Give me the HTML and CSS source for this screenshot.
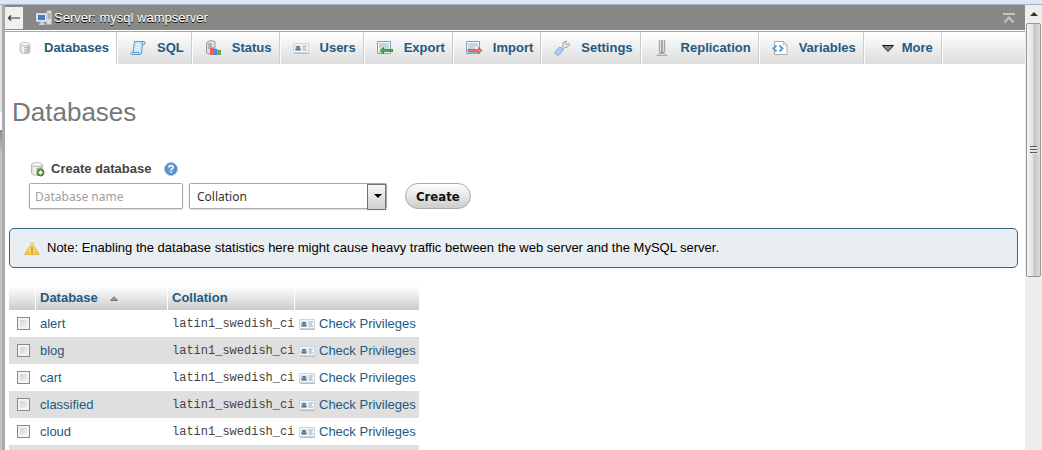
FILE: index.html
```html
<!DOCTYPE html>
<html lang="en">
<head>
    <meta charset="UTF-8">
    <meta name="viewport" content="width=device-width, initial-scale=1.0">
    <title>mysql wampserver | phpMyAdmin</title>
    <link rel="stylesheet" href="styles.css">
</head>
<body>
    <!-- icon sprite -->
    <svg class="sprite" aria-hidden="true">
        <defs>
            <linearGradient id="cyl" x1="0" x2="1" y1="0" y2="0">
                <stop offset="0" stop-color="#d8d8d8"/>
                <stop offset=".4" stop-color="#fafafa"/>
                <stop offset="1" stop-color="#b4b4b4"/>
            </linearGradient>
            <linearGradient id="warn" x1="0" x2="0" y1="0" y2="1">
                <stop offset="0" stop-color="#fff3b0"/>
                <stop offset="1" stop-color="#f5c33c"/>
            </linearGradient>
        </defs>
        <symbol id="i-db" viewBox="0 0 16 16">
            <path d="M2.500 3.500v9c0 2.400 11 2.400 11 0v-9z" fill="url(#cyl)" stroke="#b8b8b8"/>
            <ellipse cx="8" cy="3.600" rx="5.500" ry="2" fill="#f6f6f6" stroke="#c0c0c0"/>
            <path d="M7 7.500c2 .2 4-.1 5-.5M7 10c2 .2 4-.1 5-.5M7 12.500c2 .2 4-.1 5-.5" fill="none" stroke="#a4a4a4"/>
        </symbol>
        <symbol id="i-sql" viewBox="0 0 16 16">
            <path d="M4.500 1.500h9.500c1.500 0 1.500 3 0 3h-1.500l-1 8.500c-.2 1.200-1 1.500-2 1.500H1.500c-1 0-1-2 0-2h1.500z" fill="#cfe5f6" stroke="#5b9bc8"/>
            <path d="M6 4.500h4M5.700 7h4M5.500 9.500h4" stroke="#eef7fd"/>
            <path d="M3 12.500h5.500c1 0 0 2 1.500 2M12.500 4.500c-1 0-.7-3 1-3" fill="none" stroke="#5b9bc8"/>
        </symbol>
        <symbol id="i-status" viewBox="0 0 16 16">
            <path d="M1.500 2.500l4-2 4.500 1v11l-4 2-4.500-1.500z" fill="#ddd" stroke="#999"/>
            <path d="M3 4h4M3 6h4M3 8h3" stroke="#8a8a8a"/>
            <path d="M5 7.500h4V15H5z" fill="#e5635c"/>
            <path d="M9 9h3.500v6H9z" fill="#4d86dc"/>
            <path d="M12.500 10H16v5h-3.500z" fill="#5cae55"/>
        </symbol>
        <symbol id="i-users" viewBox="0 0 16 16">
            <path d="M.5 3.500h15v9H.5z" fill="#f5f7f9" stroke="#ccd3d9"/>
            <path d="M1 13.500h15" stroke="#bbb"/>
            <path d="M2 5.500h6v5H2z" fill="#bfd3e6"/>
            <path d="M3.500 6h3v2.200h-3zM2.500 8.500h5v2h-5z" fill="#5d7487"/>
            <path d="M9.500 6h4.500M9.500 8h3.500M9.500 10h4.500" stroke="#8aa9c4"/>
        </symbol>
        <symbol id="i-export" viewBox="0 0 16 16">
            <path d="M.5 1.500h13v12H.5z" fill="#f1f7fb" stroke="#84a2b4"/>
            <path d="M2 4h10M2 6h10M2 8h10M2 12h5" stroke="#98b6ca"/>
            <path d="M3 10.500L6.500 7.500v2H16v2H6.500v2z" fill="#57a951" stroke="#287626" stroke-width=".7"/>
        </symbol>
        <symbol id="i-import" viewBox="0 0 16 16">
            <path d="M.5 1.500h13v12H.5z" fill="#f1f7fb" stroke="#84a2b4"/>
            <path d="M2 4h10M2 6h10M2 8h7M2 12.500h10" stroke="#98b6ca"/>
            <path d="M16 10.500l-3.500-3v2H2v2h10.500v2z" fill="#f27b7b" stroke="#cf2f35" stroke-width=".7"/>
        </symbol>
        <symbol id="i-settings" viewBox="0 0 16 16">
            <path d="M7 8.500l2-2.300C8.500 4 9.500 1.500 12 1l.6.500-1.600 2 1.300 1.300 2.200-1.300 1 .6c-.3 2.200-2.500 3.700-4.700 3.200l-2.200 2.500z" fill="#eee" stroke="#8d8d8d" stroke-width=".9"/>
            <path d="M6 7l3.300 2.700-4 5c-1.600 1.600-5.600-1.200-4-3.500z" fill="#b4cbf3" stroke="#7f9fd8" stroke-width=".9"/>
        </symbol>
        <symbol id="i-repl" viewBox="0 0 16 16">
            <path d="M5.500 0v11l1.500 3M10.500 0v11l-1.500 3" fill="none" stroke="#a4a4a4" stroke-width="1.400"/>
            <path d="M8 0v14" stroke="#777" stroke-width="1.200"/>
            <path d="M2.500 15.500h11M4 14h2M10 14h2" stroke="#aaa"/>
        </symbol>
        <symbol id="i-vars" viewBox="0 0 16 16">
            <path d="M2.500 1.500h9l3.500 3.500v9.500H2.500z" fill="#fff" stroke="#aaa"/>
            <path d="M11.500 1.500V5H15" fill="none" stroke="#bbb"/>
            <path d="M4.500 5.500L1.500 8.500l3 3M7.500 5.500l3 3-3 3" fill="none" stroke="#5aa0d4" stroke-width="2"/>
        </symbol>
        <symbol id="i-more" viewBox="0 0 16 16">
            <path d="M2.500 5.500h11L8 11.500z" fill="#888" stroke="#111"/>
        </symbol>
        <symbol id="i-server" viewBox="0 0 16 16">
            <path d="M10.500 1.500l3-1 2 .5v13l-2 .5h-3z" fill="#d9dedb" stroke="#a9b5ae"/>
            <path d="M11.500 4h3M11.500 6h3M11.500 8h3" stroke="#75837b"/>
            <path d="M.5 3.500h10v8H.5z" fill="#dfe7f2" stroke="#c9d6e6"/>
            <path d="M2 5h7v5H2z" fill="#4379c8"/>
            <path d="M4.500 12h3v1.500H9V15H3v-1.500h1.500z" fill="#c6d3e4"/>
        </symbol>
        <symbol id="i-help" viewBox="0 0 16 16">
            <circle cx="8" cy="8" r="6.500" fill="#6c9ad6" stroke="#a8c3e6"/>
            <circle cx="8" cy="8" r="5" fill="none" stroke="#477bbf"/>
            <path d="M5.900 6.500c0-2.800 4.300-2.600 4.300-.3 0 1.600-2.100 1.400-2.100 3.100M8.100 10.400v1.500" fill="none" stroke="#fff" stroke-width="1.500"/>
        </symbol>
        <symbol id="i-warn" viewBox="0 0 16 16">
            <path d="M8 2.500l7.300 12H.7z" fill="url(#warn)" stroke="#e6b545" stroke-linejoin="round"/>
            <path d="M8 6.500v4M8 11.500v1.500" stroke="#b98a28" stroke-width="1.500"/>
        </symbol>
        <symbol id="i-plus" viewBox="0 0 16 16">
            <circle cx="11.500" cy="11.500" r="3.500" fill="#5aa53a" stroke="#3f7d2a"/>
            <path d="M9.500 11.500h4M11.500 9.500v4" stroke="#fff" stroke-width="1.300"/>
        </symbol>
    </svg>

    <div class="window-edge"></div>
    <div class="frame">
        <div class="nav-edge"></div>
        <div class="content">
            <header class="server-bar">
                <button class="collapse" type="button" aria-label="Hide panel">
                    <svg width="14" height="8" viewBox="0 0 14 8"><path d="M1 4h12M4 1.500L1.500 4 4 6.500" fill="none" stroke="#333" stroke-width="1.200"/></svg>
                </button>
                <svg class="icon"><use href="#i-server"/></svg>
                <a class="server-name" href="#">Server: mysql wampserver</a>
                <button class="to-top" type="button" aria-label="Scroll to top">
                    <svg width="12" height="12" viewBox="0 0 12 12"><path d="M0 2h12M1.500 10.500L6 5.500l4.500 5" fill="none" stroke="#c4c4c4" stroke-width="2"/></svg>
                </button>
            </header>

            <nav class="tabs">
                <a class="tab active" href="#"><svg class="icon small"><use href="#i-db"/></svg>Databases</a>
                <a class="tab" href="#"><svg class="icon"><use href="#i-sql"/></svg>SQL</a>
                <a class="tab" href="#"><svg class="icon"><use href="#i-status"/></svg>Status</a>
                <a class="tab" href="#"><svg class="icon"><use href="#i-users"/></svg>Users</a>
                <a class="tab" href="#"><svg class="icon"><use href="#i-export"/></svg>Export</a>
                <a class="tab" href="#"><svg class="icon"><use href="#i-import"/></svg>Import</a>
                <a class="tab" href="#"><svg class="icon"><use href="#i-settings"/></svg>Settings</a>
                <a class="tab" href="#"><svg class="icon"><use href="#i-repl"/></svg>Replication</a>
                <a class="tab" href="#"><svg class="icon"><use href="#i-vars"/></svg>Variables</a>
                <a class="tab more" href="#"><svg class="icon"><use href="#i-more"/></svg>More</a>
            </nav>

            <main class="page">
                <h1>Databases</h1>

                <form class="create-form">
                    <div class="create-title">
                        <svg class="icon"><use href="#i-db"/><use href="#i-plus"/></svg>
                        <label for="new-db">Create database</label>
                        <a class="help" href="#" aria-label="Documentation"><svg class="icon"><use href="#i-help"/></svg></a>
                    </div>
                    <div class="create-fields">
                        <input class="db-name" id="new-db" type="text" placeholder="Database name">
                        <div class="select-box">
                            <select aria-label="Collation">
                                <option>Collation</option>
                                <option>latin1_swedish_ci</option>
                                <option>utf8_general_ci</option>
                            </select>
                        </div>
                        <button class="create" type="submit">Create</button>
                    </div>
                </form>

                <div class="notice">
                    <svg class="icon"><use href="#i-warn"/></svg>
                    <span>Note: Enabling the database statistics here might cause heavy traffic between the web server and the MySQL server.</span>
                </div>

                <table class="db-table">
                    <thead>
                        <tr>
                            <th class="col-check"></th>
                            <th class="col-name"><a href="#">Database<svg class="sort" width="8" height="5" viewBox="0 0 8 5"><path d="M.5 4.500L4 .7l3.500 3.800z" fill="#999" stroke="#777"/></svg></a></th>
                            <th class="col-collation"><a href="#">Collation</a></th>
                            <th class="col-action"></th>
                        </tr>
                    </thead>
                    <tbody>
                        <tr>
                            <td class="check"><input type="checkbox" aria-label="alert"></td>
                            <td><a href="#">alert</a></td>
                            <td class="collation">latin1_swedish_ci</td>
                            <td><a class="action" href="#"><svg class="icon"><use href="#i-users"/></svg>Check Privileges</a></td>
                        </tr>
                        <tr>
                            <td class="check"><input type="checkbox" aria-label="blog"></td>
                            <td><a href="#">blog</a></td>
                            <td class="collation">latin1_swedish_ci</td>
                            <td><a class="action" href="#"><svg class="icon"><use href="#i-users"/></svg>Check Privileges</a></td>
                        </tr>
                        <tr>
                            <td class="check"><input type="checkbox" aria-label="cart"></td>
                            <td><a href="#">cart</a></td>
                            <td class="collation">latin1_swedish_ci</td>
                            <td><a class="action" href="#"><svg class="icon"><use href="#i-users"/></svg>Check Privileges</a></td>
                        </tr>
                        <tr>
                            <td class="check"><input type="checkbox" aria-label="classified"></td>
                            <td><a href="#">classified</a></td>
                            <td class="collation">latin1_swedish_ci</td>
                            <td><a class="action" href="#"><svg class="icon"><use href="#i-users"/></svg>Check Privileges</a></td>
                        </tr>
                        <tr>
                            <td class="check"><input type="checkbox" aria-label="cloud"></td>
                            <td><a href="#">cloud</a></td>
                            <td class="collation">latin1_swedish_ci</td>
                            <td><a class="action" href="#"><svg class="icon"><use href="#i-users"/></svg>Check Privileges</a></td>
                        </tr>
                        <tr><td></td><td></td><td></td><td></td></tr>
                    </tbody>
                </table>
            </main>
        </div>
        <div class="scrollbar" aria-hidden="true">
            <div class="scroll-up"></div>
            <div class="thumb"><div class="grip"></div></div>
        </div>
    </div>
</body>
</html>
```
FILE: styles.css
```css
* {
    box-sizing: border-box;
}
body {
    margin: 0;
    height: 100vh;
    display: flex;
    flex-direction: column;
    overflow: hidden;
    background: #fff;
    color: #000;
    font-family: "Liberation Sans", Arial, sans-serif;
    font-size: 13px;
    line-height: 16px;
}
a {
    color: #235a81;
    text-decoration: none;
}
a:hover {
    text-decoration: underline;
}
button {
    padding: 0;
    border: 0;
    cursor: pointer;
}
.sprite {
    position: absolute;
    width: 0;
    height: 0;
}
.icon {
    width: 16px;
    height: 16px;
    flex: none;
}

/* frame */
.window-edge {
    flex: none;
    height: 5px;
    background: #d9e6f6;
    border-bottom: 1px solid #a9b4c2;
}
.frame {
    flex: 1;
    display: flex;
    min-height: 0;
}
.nav-edge {
    flex: none;
    width: 5px;
    border-right: 3px solid #aaa;
    background: linear-gradient(#e0e0e0 107px, #fff 107px, #fff 125px, #8c8c8c 125px, #c4c4c4 150px);
}
.content {
    flex: 1;
    min-width: 0;
    overflow: hidden;
}

/* server bar */
.server-bar {
    display: flex;
    align-items: center;
    height: 25px;
    padding-right: 10px;
    background: #888;
}
.collapse {
    display: flex;
    align-items: center;
    justify-content: center;
    width: 18px;
    height: 22px;
    margin-right: 13px;
    background: #f0f0f0;
}
.server-name {
    margin-left: 2px;
    color: #fff;
    text-shadow: 0 1px 0 #000;
}
.to-top {
    display: flex;
    margin-left: auto;
    background: none;
}

/* tabs */
.tabs {
    display: flex;
    height: 33px;
    margin-top: 1px;
    border-top: 1px solid #aaa;
    background: linear-gradient(#fff, #dcdcdc);
}
.tab {
    display: flex;
    align-items: center;
    gap: 11px;
    padding: 0 8px 0 12px;
    border-right: 1px solid #fff;
    box-shadow: inset -1px 0 0 #ccc;
    font-weight: bold;
    white-space: nowrap;
}
.tab.active {
    background: #fff;
}
.tab .small {
    padding: 1px;
}
.tab.more {
    gap: 6px;
    padding: 0 9px 0 15px;
}

/* page */
.page {
    padding: 0 7px 0 4px;
}
h1 {
    margin: 32px 0 0 3px;
    font-size: 26px;
    line-height: 32px;
    font-weight: normal;
    color: #777;
}
.create-form {
    padding: 33px 0 0 20px;
}
.create-title {
    display: flex;
    align-items: center;
    color: #444;
    font-weight: bold;
}
.create-title label {
    margin: 0 12px 0 6px;
}
.help {
    display: flex;
}
.create-fields {
    display: flex;
    margin-top: 6px;
}
.db-name,
.select-box select {
    height: 26px;
    padding: 0 7px;
    border: 1px solid #aaa;
    border-radius: 2px;
    background: #fff;
    color: #333;
    font-family: "Noto Sans", sans-serif;
    font-size: 12px;
}
.db-name {
    width: 154px;
    padding: 0 5px;
    margin-right: 6px;
    box-shadow: 0 1px 2px #ddd;
}
.db-name::placeholder {
    color: #a0a0a0;
}
.select-box {
    position: relative;
    width: 198px;
    margin-right: 18px;
}
.select-box select {
    width: 100%;
    appearance: none;
    box-shadow: 0 1px 2px #ddd;
}
/* drop-down arrow */
.select-box::before {
    content: "";
    position: absolute;
    top: 1px;
    right: 1px;
    width: 17px;
    height: 24px;
    border: 1px solid #707070;
    background: linear-gradient(#f6f6f6, #cfcfcf);
    pointer-events: none;
}
.select-box::after {
    content: "";
    position: absolute;
    top: 11px;
    right: 5px;
    border: 4px solid transparent;
    border-top-color: #000;
    border-bottom: 0;
    pointer-events: none;
}
.create {
    height: 26px;
    padding: 0 10px;
    border: 1px solid #aaa;
    border-radius: 13px;
    background: linear-gradient(#fff, #ccc);
    color: #111;
    font-family: "DejaVu Sans Condensed", "DejaVu Sans", sans-serif;
    font-size: 13px;
    font-weight: bold;
}
.notice {
    display: flex;
    align-items: center;
    gap: 7px;
    margin-top: 19px;
    padding: 11px 14px;
    min-height: 40px;
    border: 1px solid #3a647e;
    border-radius: 5px;
    background: #e8eef1;
}

/* database list */
.db-table {
    margin-top: 18px;
    border-collapse: separate;
    border-spacing: 0;
}
.db-table th {
    height: 24px;
    padding: 0 4px;
    border-right: 1px solid #fff;
    background: linear-gradient(#fff, #ccc);
    text-align: left;
}
.db-table th:last-child {
    border-right: 0;
}
.db-table td {
    height: 27px;
    padding: 0 4px;
}
.db-table td:last-child {
    padding-right: 3px;
}
.db-table tbody tr:nth-child(even) {
    background: #dfdfdf;
}
.col-check {
    width: 27px;
}
.col-name {
    width: 132px;
}
.col-collation {
    width: 127px;
}
.col-action {
    width: 124px;
}
.sort {
    margin: 0 0 1px 12px;
}
.db-table .check {
    padding: 0 6px 0 8px;
}
.check input {
    display: block;
    appearance: none;
    width: 13px;
    height: 13px;
    margin: 0;
    border: 1px solid #8a8a8a;
    background: linear-gradient(135deg, #c8cbd0, #fafafa);
    box-shadow: inset 0 0 0 2px #f4f4f4;
}
.db-table .collation {
    padding: 0 0 0 4px;
    color: #444;
    font-family: "Liberation Mono", "Courier New", monospace;
    font-size: 12px;
}
.action {
    display: flex;
    align-items: center;
    gap: 4px;
    white-space: nowrap;
}

/* scrollbar */
.scrollbar {
    flex: none;
    display: flex;
    flex-direction: column;
    width: 17px;
    padding: 0 1px;
    background: #eee;
}
.scroll-up {
    display: flex;
    align-items: center;
    justify-content: center;
    height: 18px;
}
.scroll-up::before {
    content: "";
    border: 4px solid transparent;
    border-bottom-color: #333;
    border-top: 0;
}
.thumb {
    display: flex;
    align-items: center;
    justify-content: center;
    height: 57%;
    border: 1px solid #979797;
    border-radius: 2px;
    background: linear-gradient(to right, #f5f5f5, #e2e2e2 45%, #c4c4c8 55%, #dcdcdc);
}
.grip {
    width: 7px;
    height: 8px;
    background: repeating-linear-gradient(#555 0, #555 1px, #eee 1px, #ddd 3px);
}
```
